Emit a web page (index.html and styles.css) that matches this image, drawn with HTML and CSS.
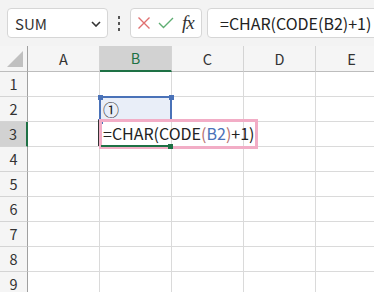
FILE: index.html
```html
<!DOCTYPE html>
<html>
<head>
<meta charset="utf-8">
<link rel="stylesheet" href="styles.css">
</head>
<body>
<div class="app">
  <div class="toolbar">
    <div class="namebox">
      <span class="name">SUM</span>
      <svg class="chev" width="10" height="6" viewBox="0 0 10 6"><path d="M1 1 L5 5 L9 1" fill="none" stroke="#333" stroke-width="1.6"/></svg>
    </div>
    <div class="dots"><i></i><i></i><i></i></div>
    <div class="fxgroup">
      <svg width="14" height="14" viewBox="0 0 14 14"><path d="M1.5 1.5 L12.5 12.5 M12.5 1.5 L1.5 12.5" stroke="#e07070" stroke-width="1.4" fill="none"/></svg>
      <svg width="16" height="12" viewBox="0 0 16 12"><path d="M1 6 L5.5 10.5 L15 1" stroke="#5fae73" stroke-width="1.4" fill="none"/></svg>
      <span class="fx">fx</span>
    </div>
    <div class="formula">=CHAR(CODE(B2)+1)</div>
  </div>
  <div class="sheet">
    <div class="grid">
      <div class="corner"><span class="tri"></span></div>
      <div class="ch">A</div><div class="ch sel">B</div><div class="ch">C</div><div class="ch">D</div><div class="ch">E</div>
      <div class="rh">1</div><div class="c"></div><div class="c"></div><div class="c"></div><div class="c"></div><div class="c"></div>
      <div class="rh">2</div><div class="c"></div><div class="c"></div><div class="c"></div><div class="c"></div><div class="c"></div>
      <div class="rh sel">3</div><div class="c"></div><div class="c"></div><div class="c"></div><div class="c"></div><div class="c"></div>
      <div class="rh">4</div><div class="c"></div><div class="c"></div><div class="c"></div><div class="c"></div><div class="c"></div>
      <div class="rh">5</div><div class="c"></div><div class="c"></div><div class="c"></div><div class="c"></div><div class="c"></div>
      <div class="rh">6</div><div class="c"></div><div class="c"></div><div class="c"></div><div class="c"></div><div class="c"></div>
      <div class="rh">7</div><div class="c"></div><div class="c"></div><div class="c"></div><div class="c"></div><div class="c"></div>
      <div class="rh">8</div><div class="c"></div><div class="c"></div><div class="c"></div><div class="c"></div><div class="c"></div>
      <div class="rh">9</div><div class="c"></div><div class="c"></div><div class="c"></div><div class="c"></div><div class="c"></div>
    </div>
    <div class="refsel">
      <span class="circ">①</span>
      <i class="h h1"></i><i class="h h2"></i><i class="h h3"></i>
    </div>
    <div class="active"></div>
    <i class="handle"></i>
    <div class="editor">=CHAR(CODE<span class="par">(</span><span class="ref">B2</span><span class="par">)</span>+1)</div>
  </div>
</div>
</body>
</html>
```
FILE: styles.css
```css
* { box-sizing: border-box; margin: 0; padding: 0; }
html, body { width: 374px; height: 292px; overflow: hidden; background: #fff; }
body { font-family: "Noto Sans CJK JP", "Noto Sans", sans-serif; color: #222; }
.app { width: 374px; height: 292px; overflow: hidden; }

.toolbar {
  height: 46px;
  background: #f3f3f3;
  display: flex;
  align-items: center;
  padding: 0 0 0 7px;
  white-space: nowrap;
}
.namebox {
  width: 101px; height: 30px;
  background: #fff;
  border: 1px solid #d6d6d6;
  border-radius: 4px;
  display: flex; align-items: center; justify-content: space-between;
  padding: 0 6px 0 7px;
  flex: none;
}
.name { font-size: 15px; color: #333; }
.chev { margin-top: 1px; }
.dots { width: 22px; display: flex; flex-direction: column; align-items: center; gap: 3px; flex: none; }
.dots i { display: block; width: 2px; height: 3px; background: #555; }
.fxgroup {
  width: 72px; height: 30px; flex: none;
  background: #fff; border: 1px solid #d6d6d6; border-radius: 4px;
  display: flex; align-items: center; padding-left: 6px; gap: 7px;
}
.fx { font-family: "Liberation Serif", serif; font-style: italic; font-size: 19px; color: #333; margin-left: 1px; letter-spacing: -1px; line-height: 20px; }
.formula {
  margin-left: 5px; height: 30px; flex: 1 0 180px;
  background: #fff; border: 1px solid #d6d6d6; border-radius: 4px;
  font-size: 16px; color: #222; line-height: 28px; padding-left: 12px;
}

.sheet { position: relative; }
.grid {
  display: grid;
  grid-template-columns: 28px repeat(5, 72px);
  grid-template-rows: 26px repeat(9, 25px);
}
.corner { background: #f5f5f5; border-right: 1px solid #a0a0a0; border-bottom: 1px solid #bdbdbd; position: relative; }
.tri { position: absolute; right: 4px; bottom: 4px; width: 0; height: 0; border-left: 16px solid transparent; border-bottom: 16px solid #c0c0c0; }
.ch {
  background: #f5f5f5; border-right: 1px solid #d4d4d4; border-bottom: 1px solid #bdbdbd;
  font-size: 14.5px; text-align: center; line-height: 25px; color: #333;
}
.ch.sel { background: #d2d2d2; border-bottom: 2px solid #1e7145; color: #1e7145; line-height: 24px; }
.rh {
  background: #f5f5f5; border-right: 1px solid #a0a0a0; border-bottom: 1px solid #d4d4d4;
  font-size: 14.5px; text-align: center; line-height: 24px; color: #333;
}
.rh.sel { background: #d2d2d2; border-right: 2px solid #1e7145; }
.c { border-right: 1px solid #dadada; border-bottom: 1px solid #dadada; }

.refsel {
  position: absolute; left: 99px; top: 50px; width: 73px; height: 26px;
  background: #e9eef8; border: 2px solid #4a72b8;
}
.circ { position: absolute; left: 2px; top: 0px; font-size: 16px; line-height: 22px; color: #222; }
.h { position: absolute; width: 5px; height: 5px; background: #4a72b8; }
.h1 { left: -3.5px; top: -3.5px; }
.h2 { right: -3.5px; top: -3.5px; }
.h3 { left: -3.5px; bottom: -3.5px; }

.active { position: absolute; left: 98px; top: 74px; width: 2px; height: 26px; background: #333; }
.editor {
  position: absolute; left: 99px; top: 73px; width: 159px; height: 30px;
  border: 3px solid #f2adc6; background: transparent;
  font-size: 16px; line-height: 23px; padding-left: 1px; color: #222; white-space: nowrap;
}
.editor::after { content: ""; position: absolute; left: -1px; bottom: -1px; width: 70px; height: 2px; background: #1e7145; }
.handle { position: absolute; left: 168px; top: 98px; width: 5px; height: 5px; background: #1e7145; z-index: 2; }
.ref { color: #4a72b8; }
.par { color: #b87070; }
```
